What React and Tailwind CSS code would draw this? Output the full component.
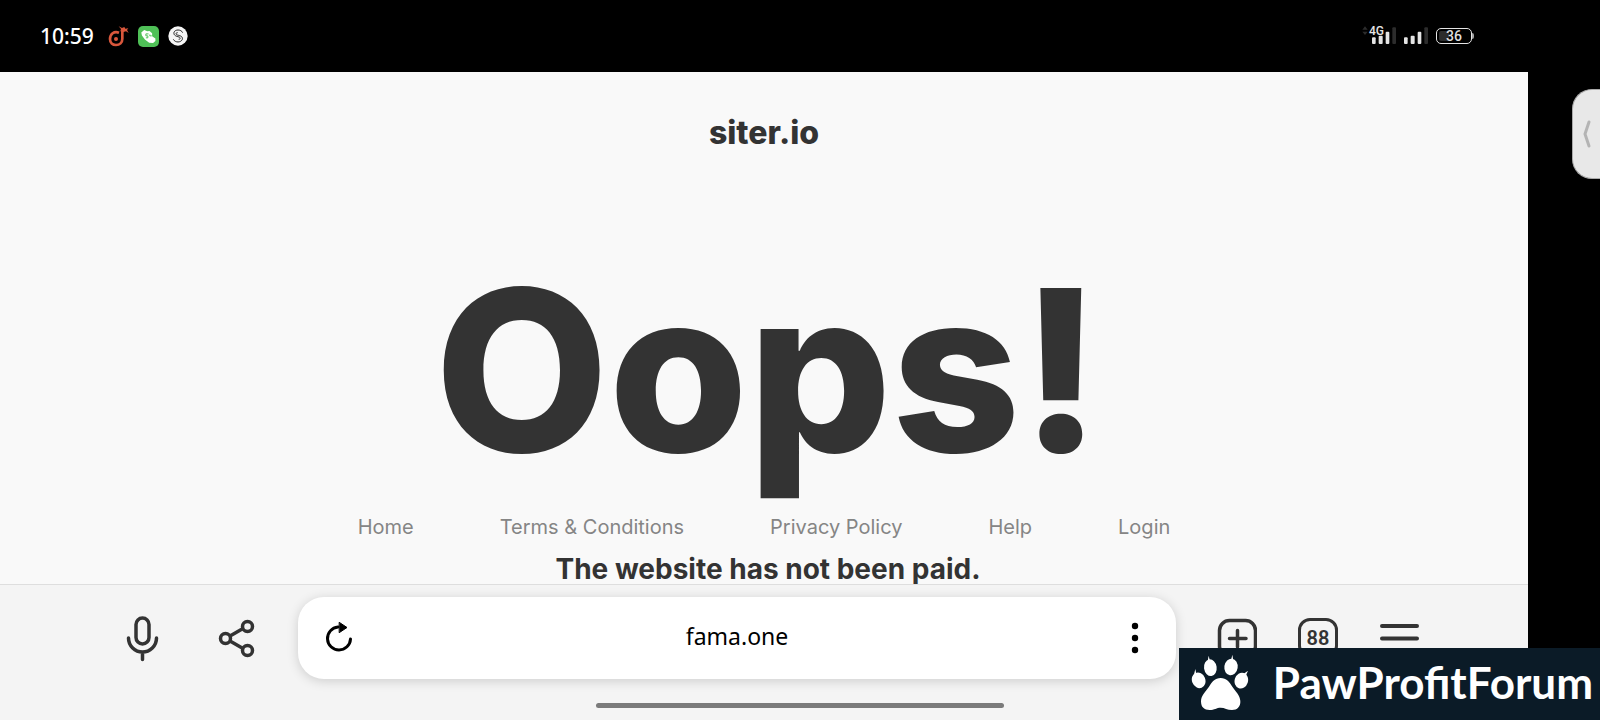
import React, { useState } from 'react';

const LINKS = ['Home', 'Terms & Conditions', 'Privacy Policy', 'Help', 'Login'];

function MusicIcon() {
  return (
    <svg className="h-[21px] w-[21px]" viewBox="325 78 63 63" fill="none" aria-hidden="true">
      <path d="M358 98 C343 92 331 102 331 117 C331 129 339 135 349 135 C360 135 368 128 368 116 V90" stroke="#d9573c" strokeWidth="8" />
      <circle cx="349" cy="117" r="6" fill="#d9573c" />
      <path d="M357 79 L367 84 L374 81 L377 86 L386 85 L382 90 L387 99 L379 94 L371 96 L362 94 L364 87 Z" fill="#d9573c" />
    </svg>
  );
}

function CallIcon() {
  return (
    <svg className="h-[21px] w-[21px]" viewBox="413 78 64 64" aria-hidden="true">
      <rect x="413" y="78" width="64" height="64" rx="15" fill="#4fc057" />
      <path d="M423 98 L432 90 L441 94 L448 93 L456 100 L456 109 L466 116 L466 124 L459 130 L447 129 L434 119 L425 107 Z" fill="#fff" />
      <path d="M445 102 H437 V108 H443 V114 H437 M449 104 V108 H455" fill="none" stroke="#4fc057" strokeWidth="3" />
    </svg>
  );
}

function CoinIcon() {
  return (
    <svg className="h-5 w-5" viewBox="502 79 60 60" fill="none" aria-hidden="true">
      <circle cx="532" cy="109" r="29" fill="#f5f5f5" />
      <path d="M546 99 C541 88 523 89 520 98 C518 108 528 110 535 112 C541 114 539 119 534 119" stroke="#222" strokeWidth="3" />
      <path d="M518 119 C524 130 541 129 545 119 C547 110 538 108 530 106 C524 104 525 99 531 99" stroke="#222" strokeWidth="3" />
    </svg>
  );
}

function SignalIcons() {
  return (
    <svg className="h-7 w-[67px]" viewBox="64 64 201 84" aria-hidden="true">
      <path d="M65 87 L73 77 L81 87 Z M65 93 L73 103 L81 93 Z" fill="#2c2c2c" />
      <g fill="#e4e4e4">
        <rect x="94" y="110" width="11" height="20" rx="3" />
        <rect x="114" y="105" width="12" height="25" rx="3" />
        <rect x="135" y="93" width="11" height="37" rx="3" />
        <rect x="190" y="110" width="11" height="20" rx="3" />
        <rect x="210" y="105" width="12" height="25" rx="3" />
        <rect x="231" y="93" width="11" height="37" rx="3" />
      </g>
      <rect x="155" y="80" width="11" height="50" rx="3" fill="#2c2c2c" />
      <rect x="251" y="80" width="11" height="50" rx="3" fill="#2c2c2c" />
      <text x="85" y="102" fontSize="36" fontWeight="500" fill="#e4e4e4" fontFamily="Roboto, sans-serif">4G</text>
    </svg>
  );
}

function StatusBar() {
  return (
    <header className="flex h-18 shrink-0 items-center bg-black pr-[126px] pl-10 text-white">
      <time className="font-['Noto_Sans',sans-serif] text-[21px] leading-6 font-medium">10:59</time>
      <div className="ml-[14px] flex items-center gap-[9px]">
        <MusicIcon />
        <CallIcon />
        <CoinIcon />
      </div>
      <div className="ml-auto flex items-center gap-[7px]">
        <SignalIcons />
        <div className="flex items-center">
          <span className="flex h-4 w-9 items-center justify-center rounded-[5px] border border-[#e4e4e4] bg-linear-to-r from-[#2c2c2c] from-35% to-black to-35% bg-clip-content p-[2px] font-['Roboto',sans-serif] text-[14px] leading-3 font-medium text-[#dedede]">
            36
          </span>
          <span className="h-[6px] w-[2px] rounded-r-sm bg-[#a0a0a0]" />
        </div>
      </div>
    </header>
  );
}

function SiteNotice() {
  return (
    <main className="flex min-h-0 flex-1 flex-col items-center bg-[#f9f9f9] pt-[41px] text-[#333]">
      <p className="text-[32px] leading-10 font-extrabold">siter.io</p>
      <h1 className="mt-[81px] pl-2 text-[225px] leading-[272px] font-extrabold">Oops!</h1>
      <nav className="mt-[9px] flex h-6 shrink-0 items-center gap-[86px]">
        {LINKS.map((label) => (
          <a key={label} href="#" className="text-[20px] leading-6 whitespace-nowrap text-[#858585]">
            {label}
          </a>
        ))}
      </nav>
      <h2 className="mt-4 shrink-0 pl-2 text-[28px] leading-7 font-bold">The website has not been paid.</h2>
    </main>
  );
}

function BrowserBar() {
  const [url, setUrl] = useState('fama.one');

  return (
    <footer className="flex h-[136px] shrink-0 items-start gap-[41px] border-t border-[#dedede] bg-[#f4f4f4] pt-3 pr-[109px] pl-[122px] text-[#333]">
      <div className="flex h-[82px] items-center gap-[55px]">
        <button type="button" aria-label="Voice search">
          <svg className="h-12 w-10" viewBox="0 0 40 48" fill="none" stroke="currentColor" strokeWidth="3.500" strokeLinecap="round">
            <rect x="14" y="4" width="13" height="26" rx="6.5" />
            <path d="M6.500 24 C6.500 32 13 38 20.500 38 C28 38 34.500 32 34.500 24 M20.500 38 V45.500" />
          </svg>
        </button>
        <button type="button" aria-label="Share">
          <svg className="h-10 w-10" viewBox="0 0 40 40" fill="none" stroke="currentColor" strokeWidth="3.500">
            <circle cx="8.500" cy="20.500" r="5" />
            <circle cx="30.500" cy="8.500" r="5" />
            <circle cx="30.500" cy="32.500" r="5" />
            <path d="M13 18 L26 10.500 M13 23 L26 30.500" />
          </svg>
        </button>
      </div>

      <div className="flex h-[82px] min-w-0 flex-1 items-center rounded-[26px] bg-white px-5 text-black shadow-[0_2px_12px_rgba(0,0,0,0.16)]">
        <button type="button" aria-label="Reload">
          <svg className="h-10 w-10" viewBox="0 0 40 40" fill="none" stroke="currentColor" strokeWidth="3" strokeLinecap="round">
            <path d="M20 9 A11.500 11.500 0 1 0 32.500 21" />
            <path d="M21.500 4.500 L29 9.500 L21.500 14.500 Z" fill="currentColor" strokeWidth="1" />
          </svg>
        </button>
        <input
          aria-label="Address"
          value={url}
          onChange={(e) => setUrl(e.target.value)}
          className="h-10 min-w-0 flex-1 bg-transparent pb-1 text-center font-['Noto_Sans',sans-serif] text-[23px] leading-8 outline-none"
        />
        <button type="button" aria-label="Page options">
          <svg className="h-10 w-10" viewBox="0 0 40 40" fill="currentColor">
            <circle cx="19" cy="8" r="3.2" />
            <circle cx="19" cy="20" r="3.2" />
            <circle cx="19" cy="32" r="3.2" />
          </svg>
        </button>
      </div>

      <div className="flex h-[82px] items-center gap-[41px]">
        <button type="button" aria-label="New tab">
          <svg className="h-10 w-10" viewBox="0 0 40 40" fill="none" stroke="currentColor" strokeWidth="3.500" strokeLinecap="round">
            <rect x="2.500" y="2.500" width="36" height="36" rx="10" />
            <path d="M12.500 20.500 H29 M20.500 12.500 V29" />
          </svg>
        </button>
        <button
          type="button"
          aria-label="Open tabs"
          className="flex h-10 w-10 items-center justify-center rounded-xl border-3 border-[#333] font-['Roboto',sans-serif] text-[20px] leading-6 font-semibold"
        >
          88
        </button>
        <button type="button" aria-label="Menu">
          <svg className="h-10 w-10" viewBox="0 0 40 40" fill="none" stroke="currentColor" strokeWidth="4" strokeLinecap="round">
            <path d="M3 8 H38 M3 20.500 H38 M3 33 H38" />
          </svg>
        </button>
      </div>
    </footer>
  );
}

function Watermark() {
  return (
    <div className="absolute right-0 bottom-0 flex h-18 items-center gap-6 bg-[#0b1b27] pr-[7px] pb-1 pl-3 text-white">
      <svg className="h-[57px] w-[58px]" viewBox="270 248 174 171" fill="currentColor" aria-hidden="true">
        <ellipse cx="328" cy="289" rx="19" ry="25" transform="rotate(-8 328 289)" />
        <ellipse cx="390" cy="287" rx="20" ry="25" transform="rotate(8 390 287)" />
        <ellipse cx="293" cy="327" rx="20" ry="24" transform="rotate(-22 293 327)" />
        <ellipse cx="421" cy="328" rx="20" ry="24" transform="rotate(18 421 328)" />
        <path d="M320 269 L323 253 L327 269 Z M390 267 L394 250 L397 268 Z M278 313 L283 293 L286 308 Z M427 308 L441 298 L434 314 Z" />
        <path d="M359 320 C342 320 333 332 324 346 C314 361 300 372 300 390 C300 408 310 416 326 416 C340 416 347 409 359 409 C371 409 379 416 393 416 C409 416 419 406 418 389 C417 371 404 361 394 346 C385 332 376 320 359 320 Z" />
      </svg>
      <span className="font-['Lato',sans-serif] text-[44px] leading-[52px] font-bold">PawProfitForum</span>
    </div>
  );
}

export default function App() {
  return (
    <div className="relative flex h-screen flex-col overflow-hidden bg-black font-['Inter',sans-serif]">
      <StatusBar />
      <div className="flex min-h-0 flex-1">
        <div className="flex min-w-0 flex-1 flex-col">
          <SiteNotice />
          <BrowserBar />
        </div>
        <aside className="flex w-18 shrink-0 justify-end pt-[17px]">
          <button
            type="button"
            aria-label="Open side panel"
            className="flex h-[90px] w-7 items-center justify-center rounded-l-[20px] border border-r-0 border-[#aaa] bg-[#e8e8e8]"
          >
            <svg className="h-7 w-2" viewBox="0 0 8 28" fill="none" stroke="#b4b4b4" strokeWidth="3" strokeLinecap="round" strokeLinejoin="round">
              <path d="M6 2 L2 14 L6 26" />
            </svg>
          </button>
        </aside>
      </div>
      {/* Home gesture indicator */}
      <div className="absolute bottom-3 left-1/2 h-[5px] w-[408px] -translate-x-1/2 rounded-full bg-[#7b7b7b]" />
      <Watermark />
    </div>
  );
}
